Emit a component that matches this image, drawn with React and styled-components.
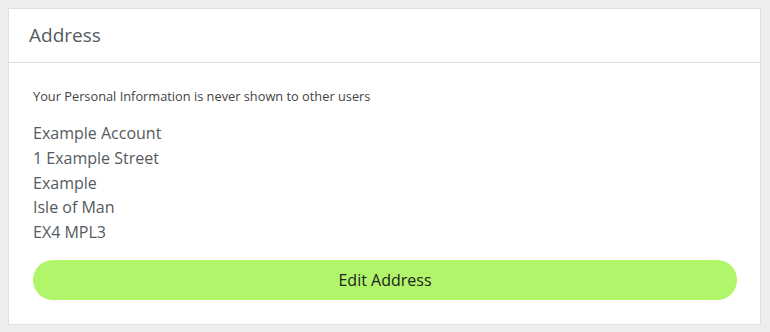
import React from "react";
import styled, { createGlobalStyle } from "styled-components";

const GlobalStyle = createGlobalStyle`
  html, body {
    margin: 0;
    padding: 0;
    background: #eeeeee;
    font-family: "Open Sans", "Liberation Sans", sans-serif;
  }
`;

const address = [
  "Example Account",
  "1 Example Street",
  "Example",
  "Isle of Man",
  "EX4 MPL3",
];

const App = () => {
  return (
    <Page>
      <GlobalStyle />
      <Card>
        <Header>
          <Title>Address</Title>
        </Header>
        <Body>
          <Note>Your Personal Information is never shown to other users</Note>
          <Lines>
            {address.map((line) => (
              <Line key={line}>{line}</Line>
            ))}
          </Lines>
          <Button type="button">Edit Address</Button>
        </Body>
      </Card>
    </Page>
  );
};

export default App;

const Page = styled.div`
  padding: 8px 9px 8px 8px;
  height: 332px;
  box-sizing: border-box;
`;

const Card = styled.div`
  background: #ffffff;
  border: 1px solid #e0e0e0;
  display: flex;
  flex-direction: column;
`;

const Header = styled.div`
  height: 54px;
  box-sizing: border-box;
  display: flex;
  align-items: center;
  padding: 0 0 2px 20px;
  border-bottom: 1px solid #dddddd;
`;

const Title = styled.h2`
  margin: 0;
  font-size: 19px;
  font-weight: 400;
  color: #555a60;
`;

const Body = styled.div`
  padding: 24px 23px 24px 24px;
  display: flex;
  flex-direction: column;
`;

const Note = styled.p`
  margin: 0;
  font-size: 12.8px;
  line-height: 18px;
  color: #444;
`;

const Lines = styled.div`
  margin-top: 16px;
  display: flex;
  flex-direction: column;
`;

const Line = styled.div`
  font-size: 16px;
  line-height: 24.75px;
  color: #555a60;
`;

const Button = styled.button`
  margin-top: 15px;
  height: 40px;
  border: none;
  border-radius: 20px;
  background: #b1f56a;
  font-family: inherit;
  font-size: 16px;
  color: #222;
  cursor: pointer;
`;
